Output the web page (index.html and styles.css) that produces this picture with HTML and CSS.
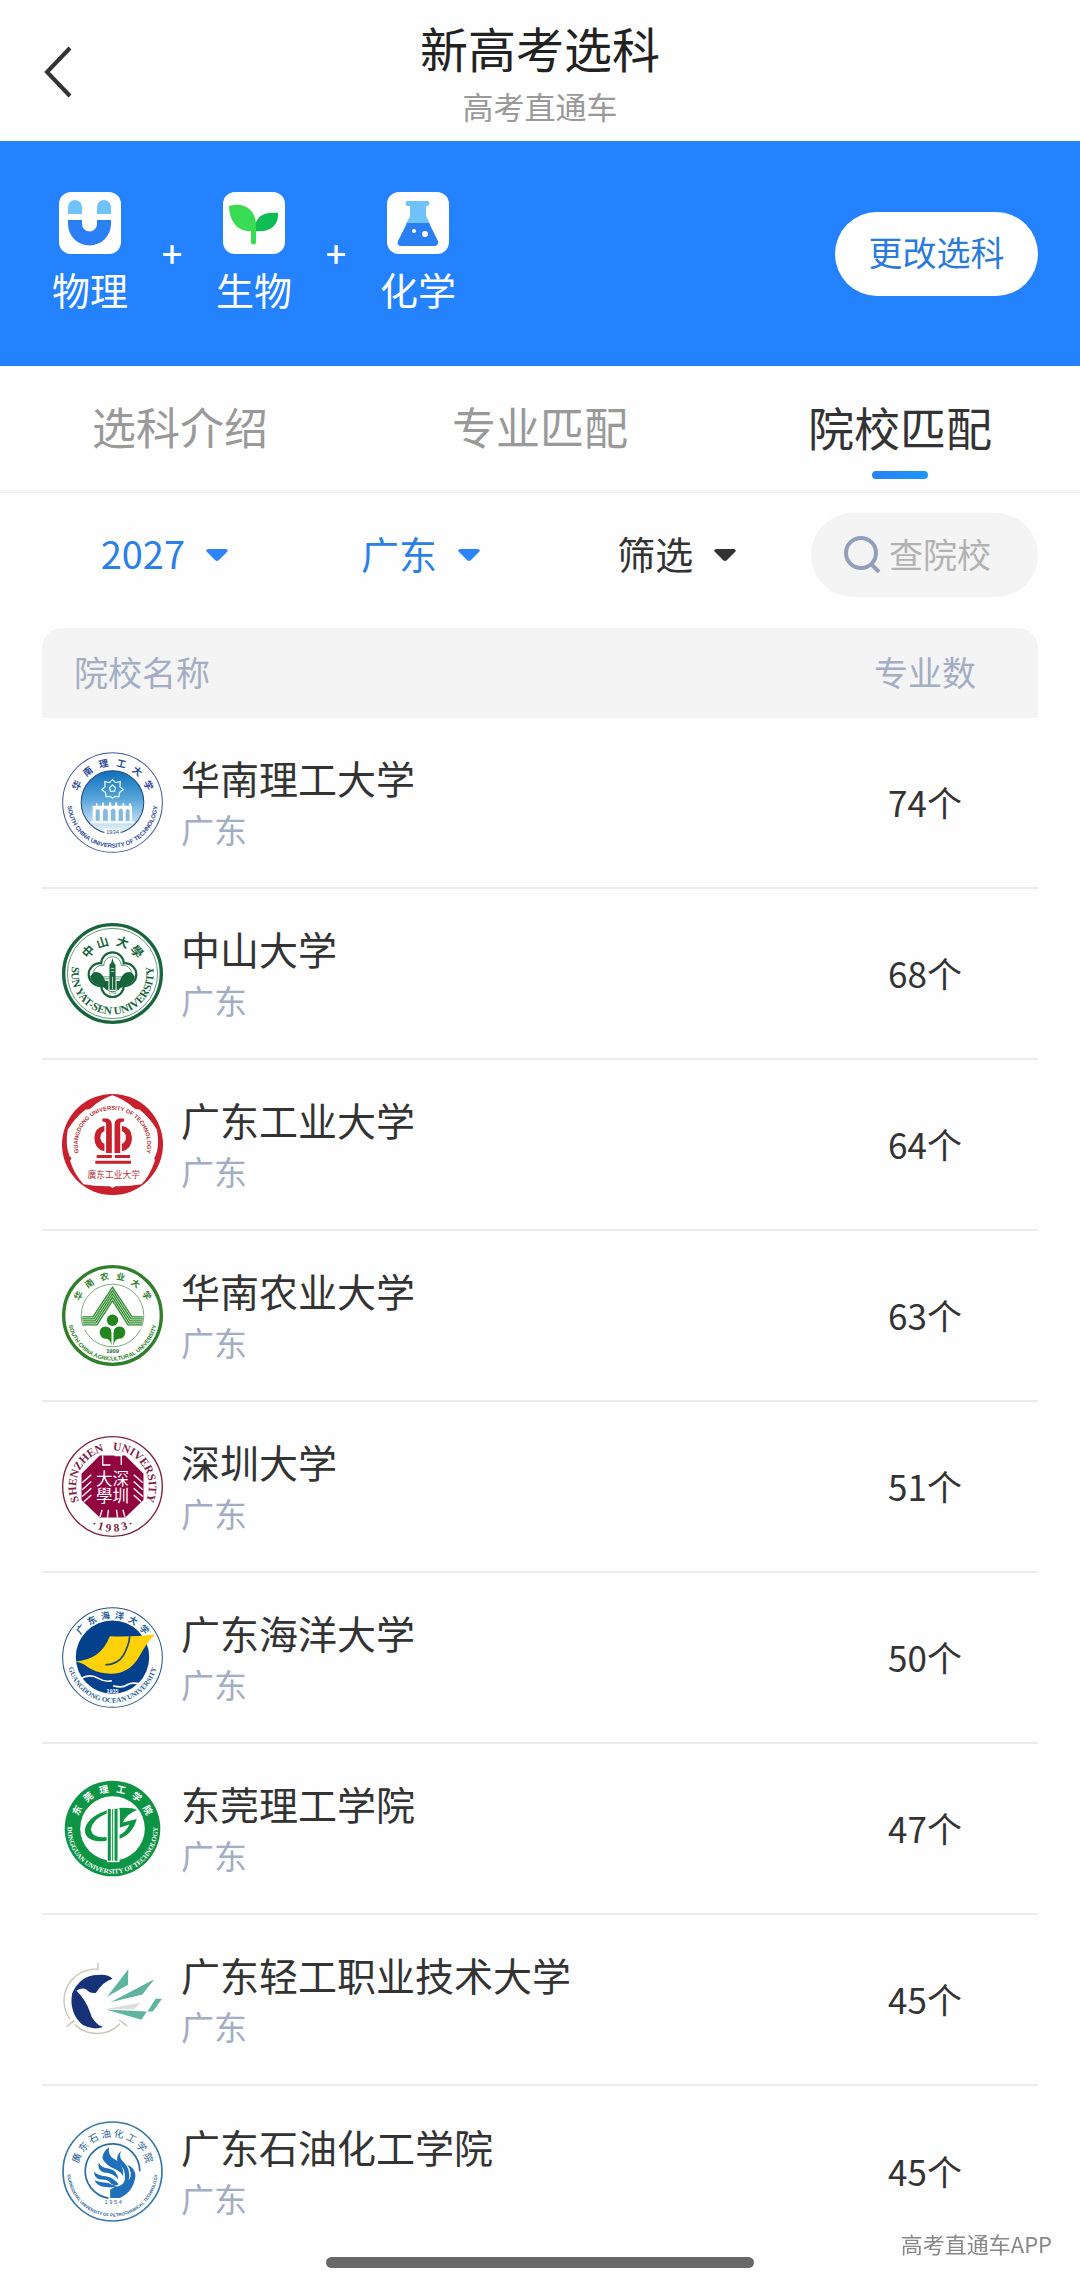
FILE: index.html
```html
<!DOCTYPE html>
<html lang="zh-CN">
<head>
  <meta charset="UTF-8" />
  <meta name="viewport" content="width=device-width, initial-scale=1.0" />
  <title>新高考选科</title>
  <link rel="stylesheet" href="styles.css">
</head>
<body>
  <!-- shared ring paths for the school badges (300 x 300 grid) -->
  <svg class="defs" width="0" height="0" aria-hidden="true">
    <defs>
      <path id="top84" d="M150 234A84 84 0 0 1 150 66A84 84 0 0 1 150 234" />
      <path id="top103" d="M150 253A103 103 0 0 1 150 47A103 103 0 0 1 150 253" />
      <path id="top108" d="M150 258A108 108 0 0 1 150 42A108 108 0 0 1 150 258" />
      <path id="top116" d="M150 266A116 116 0 0 1 150 34A116 116 0 0 1 150 266" />
      <path id="low122" d="M150 28A122 122 0 0 0 150 272A122 122 0 0 0 150 28" />
      <path id="low134" d="M150 16A134 134 0 0 0 150 284A134 134 0 0 0 150 16" />
      <linearGradient id="sky" x1="0" y1="0" x2="0" y2="1">
        <stop offset="0" stop-color="#0f70ba" />
        <stop offset="0.45" stop-color="#58a5d9" />
        <stop offset="1" stop-color="#f2f8fd" />
      </linearGradient>
    </defs>
  </svg>

  <header class="topbar">
    <button class="back" type="button" aria-label="返回">
      <svg width="32" height="54" viewBox="0 0 32 54"><path d="M28 3L5 27L28 51" fill="none" stroke="#333" stroke-width="4" /></svg>
    </button>
    <div class="heading">
      <h1>新高考选科</h1>
      <p>高考直通车</p>
    </div>
  </header>

  <section class="banner">
    <div class="subject">
      <svg class="tile" viewBox="0 0 62 62">
        <path fill="#6fc3fa" d="M9 22V15a7 7 0 0 1 14 0v7zM38 22V15a7 7 0 0 1 14 0v7z" />
        <path fill="#2b7ff5" d="M9 28h14v4a7.500 7.500 0 0 0 15 0v-4h14v4a21.500 21.500 0 0 1-43 0z" />
      </svg>
      <span>物理</span>
    </div>
    <span class="plus">+</span>
    <div class="subject">
      <svg class="tile" viewBox="0 0 62 62">
        <path fill="#10bd55" d="M32 39C31 26 39 19 55 21C56 33 47 41 32 39z" />
        <path fill="#38dc54" d="M6 14C23 9 34 20 33 35V50a2 2 0 0 1-5 0V39C14 40 6 28 6 14z" />
      </svg>
      <span>生物</span>
    </div>
    <span class="plus">+</span>
    <div class="subject">
      <svg class="tile" viewBox="0 0 62 62">
        <path fill="#6fc3fa" d="M20 9h21a3 3 0 0 1 0 5h-2v10l4 8H19l4-8V14h-3a3 3 0 0 1 0-5z" />
        <path fill="#2b7ff5" d="M20 31h22l9 18q1 5-4 5H15q-6 0-4-5z" />
        <circle cx="27" cy="39" r="2" fill="#fff" /><circle cx="38" cy="42" r="3" fill="#fff" />
      </svg>
      <span>化学</span>
    </div>
    <button class="change" type="button">更改选科</button>
  </section>

  <nav class="tabs">
    <a href="#intro">选科介绍</a>
    <a href="#majors">专业匹配</a>
    <a class="active" href="#schools" aria-current="page">院校匹配</a>
  </nav>

  <form class="filters">
    <label class="filter on">
      <select aria-label="年份"><option>2027</option></select>
      <svg class="caret" viewBox="0 0 22 12"><path d="M2 0H20Q23 1 21 3L13 11Q11 13 9 11L1 3Q-1 1 2 0z" /></svg>
    </label>
    <label class="filter on">
      <select aria-label="地区"><option>广东</option></select>
      <svg class="caret" viewBox="0 0 22 12"><path d="M2 0H20Q23 1 21 3L13 11Q11 13 9 11L1 3Q-1 1 2 0z" /></svg>
    </label>
    <label class="filter">
      <select aria-label="筛选"><option>筛选</option></select>
      <svg class="caret" viewBox="0 0 22 12"><path d="M2 0H20Q23 1 21 3L13 11Q11 13 9 11L1 3Q-1 1 2 0z" /></svg>
    </label>
    <label class="search">
      <svg width="38" height="38" viewBox="0 0 38 38"><g fill="none" stroke="#929fbb" stroke-width="4"><circle cx="18" cy="18" r="15" /><path d="M28 29L36 37" /></g></svg>
      <input type="text" placeholder="查院校" aria-label="查院校" />
    </label>
  </form>

  <table class="schools" id="schools">
    <thead>
      <tr>
        <th>院校名称</th>
        <th class="count">专业数</th>
      </tr>
    </thead>
    <tbody>
      <tr>
        <td>
          <div class="school">
            <svg class="badge" viewBox="0 0 300 300">
              <circle cx="150" cy="150" r="148" fill="#fff" stroke="#3d5792" stroke-width="3" />
              <circle cx="150" cy="149" r="93" fill="url(#sky)" stroke="#24467e" stroke-width="3" />
              <g fill="none" stroke="#d9f3fb" stroke-width="4">
                <path d="M150 82l9 9 14-3-1 15 10 9-11 8-2 13-12-1-7 5-7-5-12 1-2-13-11-8 10-9-1-15 14 3z" />
                <path d="M150 98l9 8-3 11h-12l-3-11z" />
              </g>
              <path fill="#fff" d="M95 160h6v-8h4v8h14v-10h5v10h16v-10h6v10h12v-10h6v10h16v-8h5v8h14v-8h5v8h4v44H91v-44z" />
              <path fill="#86b9de" d="M100 204v-30q6-10 12 0v30zM122 204v-30q7-12 14 0v30zM145 204v-30q7-12 14 0v30zM168 204v-30q7-12 13 0v30zM189 204v-30q6-10 12 0v30z" />
              <path stroke="#fff" stroke-width="6" d="M86 209H214" />
              <rect x="126" y="228" width="48" height="20" fill="#fff" />
              <text class="sans navy" x="150" y="245" font-size="17">1934</text>
              <text class="kai bold navy" font-size="28"><textPath href="#top108" startOffset="50%">华&ensp;&nbsp;南&ensp;&nbsp;理&ensp;&nbsp;工&ensp;&nbsp;大&ensp;&nbsp;学</textPath></text>
              <text class="sans bold navy" font-size="18"><textPath href="#low134" startOffset="50%">SOUTH CHINA UNIVERSITY OF TECHNOLOGY</textPath></text>
            </svg>
            <div><h2>华南理工大学</h2><p>广东</p></div>
          </div>
        </td>
        <td class="count">74个</td>
      </tr>
      <tr>
        <td>
          <div class="school">
            <svg class="badge" viewBox="0 0 300 300">
              <circle cx="150" cy="150" r="145" fill="#fff" stroke="#17653a" stroke-width="10" />
              <circle cx="150" cy="150" r="134" fill="none" stroke="#17653a" stroke-width="2" />
              <g fill="#fff" stroke="#17653a" stroke-width="14">
                <circle cx="150" cy="121" r="30" /><circle cx="150" cy="186" r="30" />
                <circle cx="113" cy="153" r="30" /><circle cx="187" cy="153" r="30" />
              </g>
              <g fill="#fff" stroke="#fff" stroke-width="5">
                <circle cx="150" cy="121" r="28" /><circle cx="150" cy="186" r="28" />
                <circle cx="113" cy="153" r="28" /><circle cx="187" cy="153" r="28" />
              </g>
              <g fill="none" stroke="#17653a" stroke-width="2">
                <path d="M124 126a26 26 0 1 1 52 0h10a26 26 0 1 1-10 52a26 26 0 1 1-52 0a26 26 0 1 1-10-52z" />
                <path d="M84 160H216M84 166H216" />
              </g>
              <g fill="#17653a">
                <path d="M84 160q8-18 22-14q14 2 20 22l6 8v20q-14-6-26-13q-16-3-22-23z" />
                <path d="M216 160q-8-18-22-14q-14 2-20 22l-6 8v20q14-6 26-13q16-3 22-23z" />
                <path d="M150 104l4 14 5 6v74h-18v-74l5-6z" />
                <path d="M130 172h8v26h-8zM162 172h8v26h-8z" />
              </g>
              <path stroke="#fff" stroke-width="2" d="M146 135h9M146 144h9M150 160v36" />
              <text class="serif green" x="150" y="211" font-size="11">1924</text>
              <text class="kai bold green" font-size="36"><textPath href="#top84" startOffset="50%">中&nbsp;山&nbsp;&nbsp;大&nbsp;學</textPath></text>
              <text class="serif bold green" font-size="33"><textPath href="#low122" startOffset="50%">SUN YAT-SEN UNIVERSITY</textPath></text>
            </svg>
            <div><h2>中山大学</h2><p>广东</p></div>
          </div>
        </td>
        <td class="count">68个</td>
      </tr>
      <tr>
        <td>
          <div class="school">
            <svg class="badge" viewBox="0 0 300 300">
              <circle cx="150" cy="150" r="150" fill="#c8202c" />
              <path fill="#fff" d="M150 4Q184 15 214 42Q224 47 230 46Q261 71 282 106Q291 155 277 185L274 190L276 198Q259 246 236 268Q199 275 158 274L150 279L142 274Q100 275 64 268Q36 237 24 198L28 190L22 184Q9 150 17 106Q38 71 70 46Q77 47 86 42Q115 15 150 4z" />
              <g fill="#c8202c">
                <path d="M120 73h15q13 4 13 20v82h-17V88q0-6-11-6zM184 73h-15q-13 4-13 20v82h17V88q0-6 11-6z" />
                <path d="M126 94v17q-11 3-12 18q1 15 12 19v22q-29-5-30-39q1-32 30-37zM178 94v17q11 3 12 18q-1 15-12 19v22q29-5 30-39q-1-32-30-37z" />
                <path d="M103 181h45v9h-45zM157 181h45v9h-45zM99 198h106v9H99z" />
              </g>
              <text class="kai red" x="154" y="250" font-size="26">廣东工业大学</text>
              <text class="sans bold red" font-size="17"><textPath href="#top103" startOffset="50%">GUANGDONG UNIVERSITY OF TECHNOLOGY</textPath></text>
            </svg>
            <div><h2>广东工业大学</h2><p>广东</p></div>
          </div>
        </td>
        <td class="count">64个</td>
      </tr>
      <tr>
        <td>
          <div class="school">
            <svg class="badge" viewBox="0 0 300 300">
              <circle cx="150" cy="150" r="145" fill="#fff" stroke="#2f7f2c" stroke-width="10" />
              <circle cx="150" cy="150" r="93" fill="none" stroke="#3f7f3c" stroke-width="2" />
              <path fill="#fff" d="M52 182h26v10H52zM222 182h26v10h-26z" />
              <g fill="none" stroke="#2c8a2a" stroke-width="4">
                <path d="M60 154H92L150 66L208 154H240" />
                <path d="M60 160H95L150 76L205 160H240" />
                <path d="M61 166H98L150 86L202 166H239" />
                <path d="M62 172H101L150 96L199 172H238" />
                <path d="M63 178H104L150 106L196 178H237" />
              </g>
              <g fill="#23851f">
                <circle cx="150" cy="164" r="17" />
                <path d="M147 240V203q0-20-18-20q-17 1-17 18q2 18 20 18q13 3 15 21zM153 240V203q0-20 18-20q17 1 17 18q-2 18-20 18q-13 3-15 21z" />
              </g>
              <text class="sans bold green" x="150" y="262" font-size="17">1909</text>
              <text class="kai bold leaf" font-size="26"><textPath href="#top108" startOffset="50%">华&ensp;&nbsp;南&ensp;&nbsp;农&ensp;&nbsp;业&ensp;&nbsp;大&ensp;&nbsp;学</textPath></text>
              <text class="sans bold leaf" font-size="17"><textPath href="#low134" startOffset="50%">SOUTH CHINA AGRICULTURAL UNIVERSITY</textPath></text>
            </svg>
            <div><h2>华南农业大学</h2><p>广东</p></div>
          </div>
        </td>
        <td class="count">63个</td>
      </tr>
      <tr>
        <td>
          <div class="school">
            <svg class="badge" viewBox="0 0 300 300">
              <circle cx="150" cy="150" r="148" fill="#fff" stroke="#7d1f46" stroke-width="4" />
              <path fill="#90053f" d="M112 58H188L242 112V190L188 242H112L58 190V112z" />
              <g fill="none" stroke="#fff" stroke-width="4">
                <path d="M121 58V86H144M156 58h20V86" />
                <path d="M87 115l-27 24M87 135l-27 25M87 155l-27 25M87 175l-22 20M213 115l27 24M213 135l27 25M213 155l27 25M213 175l22 20" />
                <path d="M119 219l-6 22M138 219l-3 23M162 219l3 23M181 219l6 22" />
              </g>
              <text class="cjk white" x="150" y="146" font-size="49">大深</text>
              <text class="cjk white" x="150" y="196" font-size="49">學圳</text>
              <text class="serif bold wine" font-size="34"><textPath href="#top108" startOffset="50%">SHENZHEN&ensp;&nbsp;UNIVERSITY</textPath></text>
              <text class="serif bold wine" font-size="34"><textPath href="#low134" startOffset="50%">·&nbsp;1 9 8 3&nbsp;·</textPath></text>
            </svg>
            <div><h2>深圳大学</h2><p>广东</p></div>
          </div>
        </td>
        <td class="count">51个</td>
      </tr>
      <tr>
        <td>
          <div class="school">
            <svg class="badge" viewBox="0 0 300 300">
              <circle cx="150" cy="150" r="148" fill="#fff" stroke="#23507f" stroke-width="3" />
              <circle cx="150" cy="149" r="109" fill="#04418d" />
              <path fill="#fdd20a" d="M38 162Q115 158 142 87Q205 90 276 82Q248 112 230 146Q196 206 128 197Q100 194 76 178Q62 166 38 162z" />
              <path fill="none" stroke="#1f4a7c" stroke-width="5" d="M201 87Q200 112 182 144Q166 170 129 172" />
              <g fill="none" stroke="#fff" stroke-width="5">
                <path d="M54 214Q82 196 108 212Q128 224 148 219" />
                <path d="M152 234Q180 242 194 231Q210 222 234 230" />
              </g>
              <text class="sans white bold" x="150" y="254" font-size="16">1935</text>
              <text class="kai bold blue" font-size="27"><textPath href="#top116" startOffset="50%">广&nbsp;&nbsp;东&nbsp;&nbsp;海&nbsp;&nbsp;洋&nbsp;&nbsp;大&nbsp;&nbsp;学</textPath></text>
              <text class="serif bold blue" font-size="21"><textPath href="#low134" startOffset="50%">GUANGDONG OCEAN UNIVERSITY</textPath></text>
            </svg>
            <div><h2>广东海洋大学</h2><p>广东</p></div>
          </div>
        </td>
        <td class="count">50个</td>
      </tr>
      <tr>
        <td>
          <div class="school">
            <svg class="badge" viewBox="0 0 300 300">
              <circle cx="150" cy="150" r="142" fill="#0d9545" />
              <circle cx="150" cy="150" r="96" fill="#fff" />
              <path fill="#0d9545" d="M223 93Q170 80 115 103Q68 126 68 158Q72 190 125 188L133 186V175Q90 180 86 154Q90 122 135 105Q175 92 223 93z" />
              <path fill="#0d9545" d="M171 94Q200 87 223 95Q190 108 181 132L222 122Q210 168 168 182V170Q190 162 200 138L171 148z" />
              <path fill="#fff" d="M133 90h38v160h-38z" />
              <path fill="#0d9545" d="M136 92h9v154h-9zM149 92h3v154h-3zM156 92h9v154h-9z" />
              <text class="kai bold white" font-size="28"><textPath href="#top108" startOffset="50%">东&nbsp;&nbsp;&nbsp;莞&nbsp;&nbsp;&nbsp;理&nbsp;&nbsp;&nbsp;工&nbsp;&nbsp;&nbsp;学&nbsp;&nbsp;&nbsp;院</textPath></text>
              <text class="serif bold white" font-size="20"><textPath href="#low134" startOffset="50%">DONGGUAN UNIVERSITY OF TECHNOLOGY</textPath></text>
            </svg>
            <div><h2>东莞理工学院</h2><p>广东</p></div>
          </div>
        </td>
        <td class="count">47个</td>
      </tr>
      <tr>
        <td>
          <div class="school">
            <svg class="badge" viewBox="0 0 300 300">
              <g fill="none" stroke="#c5c5b6" stroke-width="4">
                <path d="M108 60A94 94 0 0 0 24 209M38 224A94 94 0 0 0 172 222" />
                <path d="M107 40V62M14 230L36 212M170 211L194 229" />
              </g>
              <path fill="#183279" d="M150 88Q136 73 105 77Q54 78 30 132Q20 190 62 226Q92 242 122 232Q91 220 83 187Q70 150 43 124Q60 113 72 120Q84 133 101 130Q122 96 150 88z" />
              <g fill="#5fb49f">
                <path d="M134 142L197 60L196 106z" />
                <path d="M144 158L274 90L239 135z" />
                <path d="M131 180L252 186L236 210z" />
                <path d="M254 186L278 148H297L270 186z" />
              </g>
              <path fill="#dcdedd" d="M131 178L234 160L214 179z" />
            </svg>
            <div><h2>广东轻工职业技术大学</h2><p>广东</p></div>
          </div>
        </td>
        <td class="count">45个</td>
      </tr>
      <tr>
        <td>
          <div class="school">
            <svg class="badge" viewBox="0 0 300 300">
              <circle cx="150" cy="150" r="147" fill="#fff" stroke="#3977a6" stroke-width="5" />
              <path fill="none" stroke="#2b6ca3" stroke-width="5" d="M138 229A81 81 0 1 1 231 149" />
              <g fill="#1f70b8">
                <path d="M140 78Q121 91 120 110Q128 132 158 143Q178 152 181 165Q186 128 155 113Q135 103 140 78z" />
                <path d="M176 88Q159 103 165 122Q190 139 187 174Q181 195 156 196L143 204V229H171Q212 211 218 165Q219 140 194 130Q213 157 198 177Q207 145 180 119Q167 106 176 88z" />
                <path d="M109 123Q104 145 124 153Q154 154 166 174Q167 147 139 141Q116 139 109 123z" />
                <path d="M95 150Q96 171 115 174Q136 172 147 187Q162 194 168 188Q154 168 130 164Q106 163 95 150z" />
                <path d="M96 176Q107 197 131 196Q151 200 164 193Q147 190 137 184Q116 184 96 176z" />
              </g>
              <text class="sans blue" x="152" y="247" font-size="17">1 9 5 4</text>
              <text class="kai blue" font-size="29"><textPath href="#top103" startOffset="50%">廣&nbsp;东&nbsp;石&nbsp;油&nbsp;化&nbsp;工&nbsp;学&nbsp;院</textPath></text>
              <text class="sans bold blue" font-size="13"><textPath href="#low134" startOffset="50%">GUANGDONG UNIVERSITY OF PETROCHEMICAL TECHNOLOGY</textPath></text>
            </svg>
            <div><h2>广东石油化工学院</h2><p>广东</p></div>
          </div>
        </td>
        <td class="count">45个</td>
      </tr>
    </tbody>
  </table>

  <div class="home-bar"></div>
  <div class="watermark">高考直通车APP</div>
</body>
</html>
```
FILE: styles.css
```css
* {
  box-sizing: border-box;
}
body {
  margin: 0;
  padding-bottom: 27px;
  font-family: "Noto Sans CJK SC", "Noto Sans", sans-serif;
  background-color: #fefefe;
  color: #333;
}
h1, h2, p {
  margin: 0;
  font-weight: 400;
}
button, select, input {
  font-family: inherit;
  border: none;
  padding: 0;
  background: none;
}
.defs {
  display: block;
}

/* title bar */
.topbar {
  display: grid;
  grid-template-columns: 120px 1fr 120px;
  align-items: center;
  padding: 16px 0 14px;
}
.back {
  justify-self: start;
  margin-left: 42px;
  height: 54px;
  cursor: pointer;
}
.heading {
  text-align: center;
}
.heading h1 {
  font-size: 48px;
  line-height: 62px;
  color: #222;
}
.heading p {
  margin-top: 6px;
  font-size: 31px;
  line-height: 43px;
  color: #999;
}

/* chosen subjects */
.banner {
  display: flex;
  align-items: center;
  height: 225px;
  padding: 0 42px 0 52px;
  background-color: #2481ff;
  color: #fff;
}
.subject {
  display: flex;
  flex-direction: column;
  align-items: center;
  gap: 8px;
  font-size: 38px;
  line-height: 54px;
}
.tile {
  width: 62px;
  height: 62px;
  border-radius: 12px;
  background-color: #fff;
}
.plus {
  width: 88px;
  padding-bottom: 4px;
  text-align: center;
  font-size: 36px;
  font-weight: 500;
}
.change {
  margin-left: auto;
  width: 203px;
  height: 84px;
  padding-bottom: 4px;
  border-radius: 42px;
  background-color: #fff;
  color: #2b7bdc;
  font-size: 34px;
  cursor: pointer;
}

.tabs {
  display: grid;
  grid-template-columns: 1fr 1fr 1fr;
  height: 127px;
  border-bottom: 3px solid #f2f2f2;
}
.tabs a {
  display: flex;
  flex-direction: column;
  align-items: center;
  padding-top: 27px;
  font-size: 44px;
  line-height: 66px;
  color: #999;
  text-decoration: none;
}
.tabs .active {
  font-size: 46px;
  color: #333;
}
.tabs .active::after {
  content: "";
  width: 56px;
  height: 8px;
  margin-top: 12px;
  border-radius: 4px;
  background: linear-gradient(90deg, #2b80fa, #1b96f8);
}

/* filters */
.filters {
  display: flex;
  align-items: center;
  padding: 20px 42px 31px 36px;
}
.filter {
  flex: 1;
  display: flex;
  justify-content: center;
  align-items: center;
  gap: 20px;
}
.filter select {
  appearance: none;
  padding-bottom: 4px;
  font-size: 38px;
  line-height: 56px;
  color: #333;
}
.caret {
  width: 22px;
  height: 12px;
  fill: #333;
}
.filter.on select {
  color: #2b7fe8;
}
.filter.on .caret {
  fill: #2b84fa;
}
.search {
  display: flex;
  align-items: center;
  gap: 8px;
  width: 227px;
  height: 84px;
  margin-left: 6px;
  padding: 0 20px 2px 32px;
  border-radius: 42px;
  background-color: #f4f4f4;
}
.search svg {
  flex: none;
}
.search input {
  width: 100%;
  min-width: 0;
  padding-bottom: 2px;
  font-size: 34px;
  outline: none;
}
.search input::placeholder {
  color: #b2b2b2;
}

/* school list */
.schools {
  width: calc(100% - 84px);
  margin: 0 42px;
  border-spacing: 0;
}
th {
  height: 90px;
  padding: 0 0 4px 32px;
  background-color: #f4f4f4;
  color: #a3adc4;
  font-size: 34px;
  font-weight: 400;
  text-align: left;
}
th:first-child {
  border-top-left-radius: 20px;
}
th:last-child {
  border-top-right-radius: 20px;
}
td {
  height: 171px;
  padding: 0;
  border-bottom: 2px solid #ececec;
}
tr:last-child td {
  border-bottom: none;
}
.schools .count {
  width: 226px;
  padding-left: 0;
  text-align: center;
}
td.count {
  padding-bottom: 2px;
  font-size: 35px;
}
.school {
  display: flex;
  align-items: center;
  gap: 18px;
  padding-left: 20px;
}
.school h2 {
  font-size: 39px;
  line-height: 52px;
}
.school p {
  font-size: 33px;
  line-height: 52px;
  color: #a3adc4;
}

/* badges */
.badge {
  flex: none;
  width: 101px;
  height: 101px;
}
.badge text {
  text-anchor: middle;
}
.sans { font-family: "Liberation Sans", Arial, sans-serif; }
.serif { font-family: "Liberation Serif", "Times New Roman", serif; }
.kai, .cjk { font-family: "Noto Sans CJK SC", sans-serif; }
.bold { font-weight: 700; }
.navy { fill: #2b4a94; }
.green { fill: #17653a; }
.leaf { fill: #2f7f2c; }
.red { fill: #b3303c; }
.wine { fill: #7d1f46; }
.blue { fill: #2a5f96; }
.white { fill: #fff; }

/* overlays at the bottom of the screen */
.home-bar {
  position: fixed;
  left: 50%;
  bottom: 17px;
  width: 428px;
  height: 11px;
  margin-left: -214px;
  border-radius: 6px;
  background-color: #696969;
}
.watermark {
  position: fixed;
  right: 28px;
  bottom: 26px;
  font-size: 22px;
  line-height: 32px;
  color: #888;
  text-shadow: 1px 1px 0 #fff;
}
```
